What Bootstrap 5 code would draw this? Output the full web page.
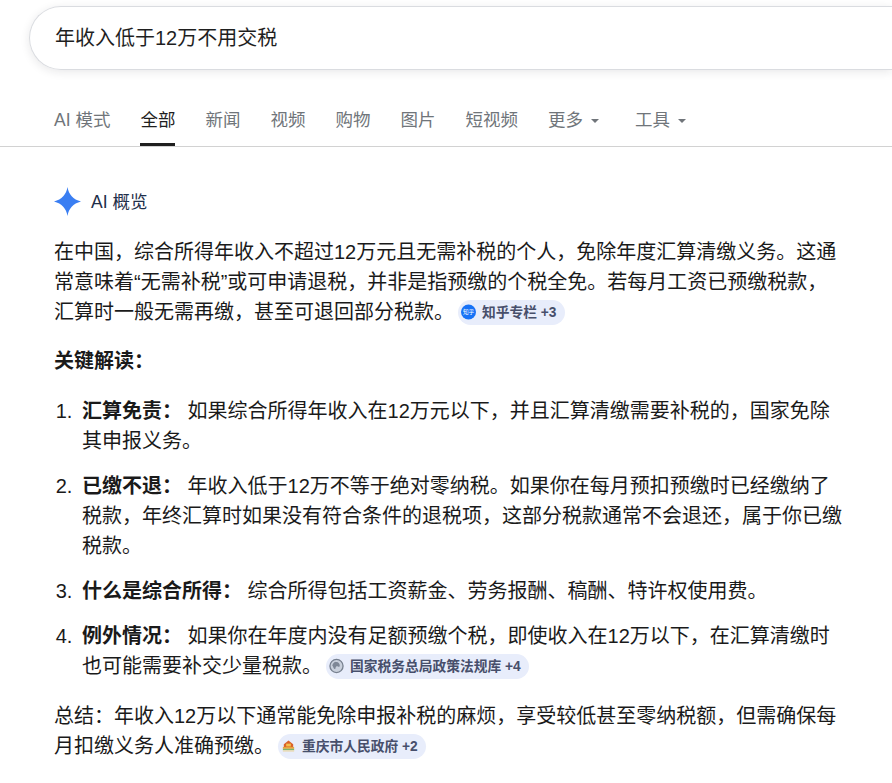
<!DOCTYPE html>
<html lang="zh-CN">
<head>
<meta charset="utf-8">
<title>年收入低于12万不用交税</title>
<link href="https://cdn.jsdelivr.net/npm/bootstrap@5.3.0/dist/css/bootstrap.min.css" rel="stylesheet">
<style>
html,body{height:783px;overflow:hidden}
body{font-family:"Liberation Sans","Noto Sans CJK SC",sans-serif;color:#1a1a1a;background:#fff;font-size:20px;line-height:30px}
.search-shell{margin:6px 0 0 29px;height:64px;border:1px solid #dadce0;border-right:0;border-radius:32px 0 0 32px;box-shadow:0 2px 10px rgba(32,33,36,.1);padding:0 0 1px 25px;font-size:20px;color:#1f1f1f}
.tab-strip{margin-top:30px;height:47px;padding-left:54px;border-bottom:1px solid #d2d2d2;gap:30px;font-size:17.5px;color:#70757a}
.tab-item{height:46px;line-height:40px;white-space:nowrap}
.tab-active{color:#1f1f1f;box-shadow:inset 0 -3px 0 #1f1f1f}
.caret-mark{display:inline-block;margin-left:8px;vertical-align:middle;border-left:4.5px solid transparent;border-right:4.5px solid transparent;border-top:4.5px solid #70757a}
.tool-item{margin-left:6px}
.main-copy{padding:0 48px 0 54px}
.ai-head{margin-top:38px;gap:10px;height:32px;font-size:17.5px;color:#1f2f4a}
.ai-label{padding-top:1px}
.para-copy{margin:20px 0 0}
.bold-head{margin:19px 0 0;font-weight:700}
.point-list{margin:20px 0 0;padding-left:24px}
.point-list li{margin-bottom:15px;padding-left:4px}
.point-list li:last-child{margin-bottom:0}
.src-chip{display:inline-flex;align-items:center;gap:6px;height:25px;padding:0 8px 0 3px;margin-left:4px;border-radius:13px;background:#e8edfb;color:#474f6b;font-size:13.75px;font-weight:700;line-height:25px;vertical-align:-1px;white-space:nowrap}
.src-chip svg{flex:none}
.summary-copy{margin:20px 0 0}
</style>
</head>
<body>
<div class="search-shell d-flex align-items-center">年收入低于12万不用交税</div>
<div class="tab-strip d-flex">
  <div class="tab-item">AI 模式</div>
  <div class="tab-item tab-active">全部</div>
  <div class="tab-item">新闻</div>
  <div class="tab-item">视频</div>
  <div class="tab-item">购物</div>
  <div class="tab-item">图片</div>
  <div class="tab-item">短视频</div>
  <div class="tab-item">更多<span class="caret-mark"></span></div>
  <div class="tab-item tool-item">工具<span class="caret-mark"></span></div>
</div>
<div class="main-copy">
  <div class="ai-head d-flex align-items-center">
    <svg width="27" height="29" viewBox="0 0 27 29" aria-hidden="true"><path d="M13.5 0C14.8 7.500 19 12.500 27 14.500C19 16.500 14.800 21.500 13.500 29C12.200 21.500 8 16.500 0 14.500C8 12.500 12.200 7.500 13.500 0Z" fill="#3a7ef2"/></svg>
    <span class="ai-label">AI 概览</span>
  </div>
  <p class="para-copy">在中国，综合所得年收入不超过12万元且无需补税的个人，免除年度汇算清缴义务。这通常意味着“无需补税”或可申请退税，并非是指预缴的个税全免。若每月工资已预缴税款，汇算时一般无需再缴，甚至可退回部分税款。<span class="src-chip"><svg width="15" height="16" viewBox="0 0 16 16" aria-hidden="true"><circle cx="8" cy="8" r="8" fill="#1772f6"/><text x="8" y="10.500" font-size="6" text-anchor="middle" fill="#fff" font-weight="400">知乎</text></svg>知乎专栏 +3</span></p>
  <p class="bold-head">关键解读：</p>
  <ol class="point-list">
    <li><b>汇算免责：</b> 如果综合所得年收入在12万元以下，并且汇算清缴需要补税的，国家免除其申报义务。</li>
    <li><b>已缴不退：</b> 年收入低于12万不等于绝对零纳税。如果你在每月预扣预缴时已经缴纳了税款，年终汇算时如果没有符合条件的退税项，这部分税款通常不会退还，属于你已缴税款。</li>
    <li><b>什么是综合所得：</b> 综合所得包括工资薪金、劳务报酬、稿酬、特许权使用费。</li>
    <li><b>例外情况：</b> 如果你在年度内没有足额预缴个税，即使收入在12万以下，在汇算清缴时也可能需要补交少量税款。<span class="src-chip"><svg width="15" height="16" viewBox="0 0 16 16" aria-hidden="true"><circle cx="8" cy="8" r="7" fill="#c9d0dc" stroke="#77808f" stroke-width="1.4"/><path d="M7 3.500c2.500 0 4.500 1.500 4.500 4 0 1.500-1 1.500-2 1s-2.500 0-2.500 1.500-1.500 1.500-2 .5-.5-2-1.500-3c.5-2 2-4 4-4z" fill="#7e8796"/></svg>国家税务总局政策法规库 +4</span></li>
  </ol>
  <p class="summary-copy">总结：年收入12万以下通常能免除申报补税的麻烦，享受较低甚至零纳税额，但需确保每月扣缴义务人准确预缴。<span class="src-chip"><svg width="15" height="16" viewBox="0 0 16 16" aria-hidden="true"><path d="M8 2l5 4v3H3V6z" fill="#d9622b"/><path d="M5.500 5.500h5v3h-5z" fill="#f3c04e"/><rect x="2" y="9" width="12" height="2" fill="#e8a33c"/><rect x="2" y="11" width="12" height="1.500" fill="#7cb46a"/><rect x="2" y="12.500" width="12" height="1.500" fill="#e9d9b0"/></svg>重庆市人民政府 +2</span></p>
</div>
<script src="https://cdn.jsdelivr.net/npm/bootstrap@5.3.0/dist/js/bootstrap.bundle.min.js"></script>
</body>
</html>
